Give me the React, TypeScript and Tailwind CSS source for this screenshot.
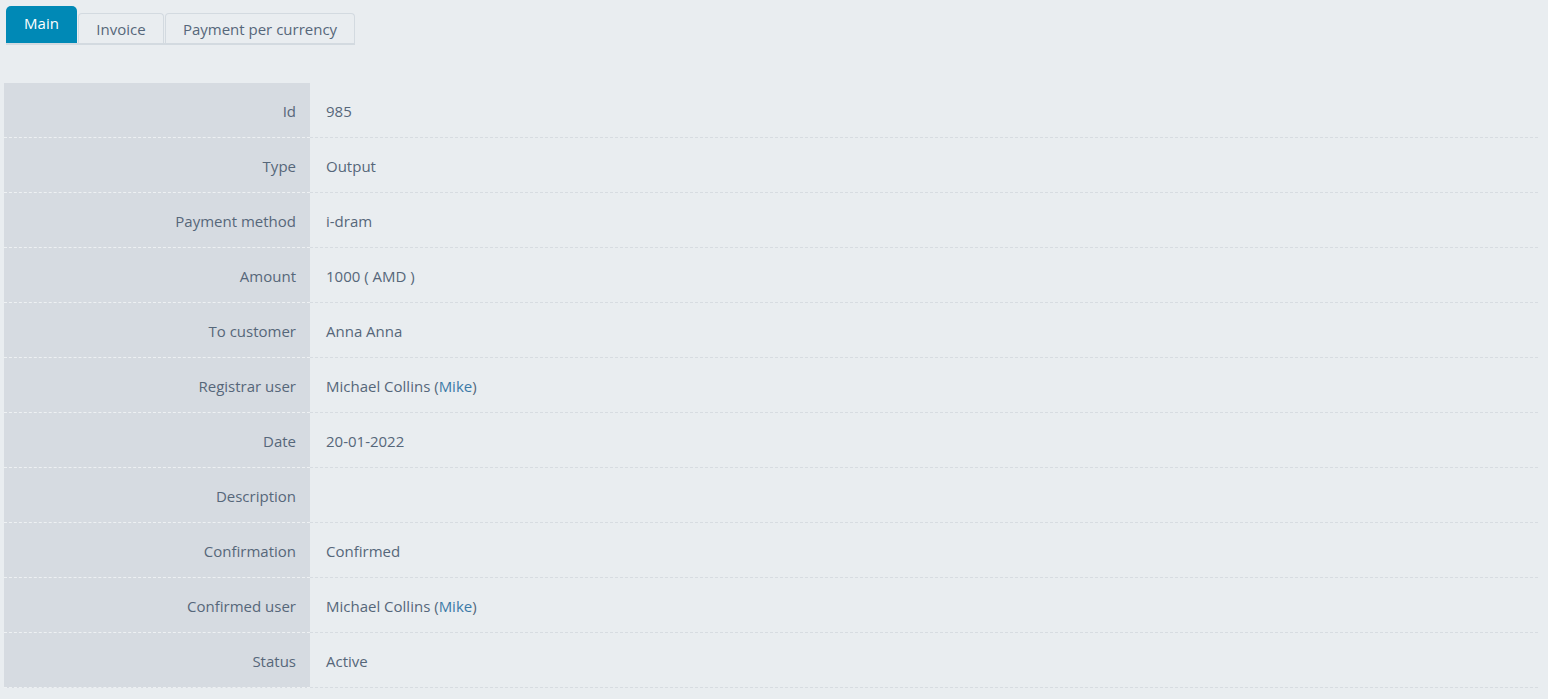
const userValue = (
  <>
    Michael Collins{" ( "}
    <span className="text-[#3b7aa8]">Mike</span>
    {" )"}
  </>
);

const rows: { label: string; value: React.ReactNode }[] = [
  { label: "Id", value: "985" },
  { label: "Type", value: "Output" },
  { label: "Payment method", value: "i-dram" },
  { label: "Amount", value: "1000 ( AMD )" },
  { label: "To customer", value: "Anna Anna" },
  { label: "Registrar user", value: userValue },
  { label: "Date", value: "20-01-2022" },
  { label: "Description", value: "" },
  { label: "Confirmation", value: "Confirmed" },
  { label: "Confirmed user", value: userValue },
  { label: "Status", value: "Active" },
];

const App = () => {
  return (
    <div className="min-h-[699px] w-full bg-[#e9edf0] text-[#56677a] text-[15px]" style={{ fontFamily: '"Open Sans", "Noto Sans", sans-serif' }}>
      <div className="pt-[6px] pl-[6px]">
        <div className="flex items-end w-[349px] border-b-2 border-[#d3dae0]">
          <div className="w-[71px] h-[37px] bg-[#0089b6] text-white rounded-t-[5px] flex items-start justify-center pt-[6px]">Main</div>
          <div className="ml-px w-[86px] h-[30px] border border-b-0 border-[#d3dae0] rounded-t-[4px] flex items-center justify-center pt-[2px]">Invoice</div>
          <div className="ml-px w-[190px] h-[30px] border border-b-0 border-[#d3dae0] rounded-t-[4px] flex items-center justify-center pt-[2px]">Payment per currency</div>
        </div>
      </div>

      <div className="mt-[38px] ml-[4px] mr-[10px]">
        {rows.map((row) => (
          <div key={row.label} className="flex h-[55px]">
            <div className="w-[306px] shrink-0 bg-[#d6dbe1] border-b border-dashed border-[#eef1f3] flex items-center justify-end pr-[14px] pt-[2px]">
              {row.label}
            </div>
            <div className="flex-1 border-b border-dashed border-[#d7dce1] flex items-center pl-[16px] pt-[2px]">
              {row.value}
            </div>
          </div>
        ))}
      </div>
    </div>
  );
};

export default App;
